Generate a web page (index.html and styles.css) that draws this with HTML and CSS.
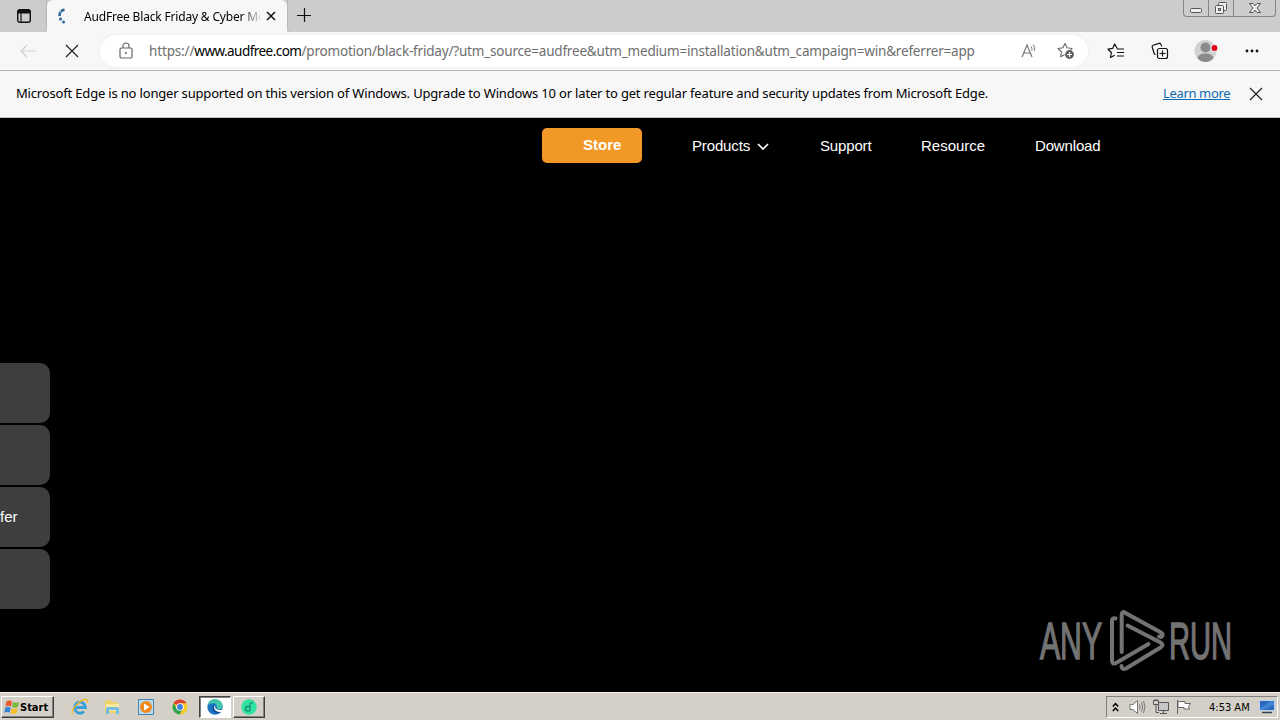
FILE: index.html
```html
<!DOCTYPE html>
<html>
<head>
    <meta charset="UTF-8">
    <title>AudFree Black Friday &amp; Cyber Monday</title>
    <link rel="stylesheet" href="styles.css">
</head>
<body>
    <!-- tab strip -->
    <div class="tabstrip">
        <div class="tab-menu">
            <svg width="16" height="16" viewBox="0 0 16 16"><rect x="1.7" y="1.7" width="12.6" height="12.6" rx="2" fill="none" stroke="#111" stroke-width="1.4"/><path d="M2 2h12v3.5H2z" fill="#111"/><path d="M5 5v9" stroke="#111" stroke-width="1.2"/></svg>
        </div>
        <div class="tab">
            <svg class="tab-spinner" width="12" height="16" viewBox="0 0 12 16"><path d="M7.500 1.600C3.800 2.600 2.300 5 2.500 8.200" fill="none" stroke="#2a679c" stroke-width="2.600" stroke-dasharray="4 .8"/><circle cx="3.500" cy="11" r="1.500" fill="#2a679c"/><circle cx="6.500" cy="14" r="1.500" fill="#2a679c"/></svg>
            <span class="tab-title">AudFree Black Friday &amp; Cyber Mo</span>
            <svg class="tab-close" width="10" height="10" viewBox="0 0 10 10"><path d="M1 1l8 8M9 1l-8 8" stroke="#111" stroke-width="1.5"/></svg>
        </div>
        <div class="tab-new">
            <svg width="14" height="14" viewBox="0 0 14 14"><path d="M7.5 0v14M0 7.5h14" stroke="#111" stroke-width="1.2"/></svg>
        </div>
        <div class="window-btns">
            <span class="win-btn"><svg width="14" height="14" viewBox="0 0 14 14"><rect x="1.5" y="8.5" width="11" height="4" rx="1" fill="#eee" stroke="#555"/></svg></span>
            <span class="win-btn"><svg width="14" height="14" viewBox="0 0 14 14"><rect x="4.5" y="2.5" width="8" height="8" rx="1" fill="#eee" stroke="#555"/><rect x="1.5" y="5.5" width="8" height="8" rx="1" fill="#eee" stroke="#555"/><rect x="4.5" y="8.5" width="2" height="2" fill="#ccc" stroke="#555"/></svg></span>
            <span class="win-btn win-close"><svg width="14" height="14" viewBox="0 0 14 14"><path d="M1.500 3.500h3.500l2 2.300 2-2.300h3.500l-3.500 4.500 3.500 4.500H9L7 10.200 5 12.500H1.500L5 8z" fill="#eee" stroke="#555"/></svg></span>
        </div>
    </div>

    <!-- address bar -->
    <div class="toolbar">
        <svg class="back" width="16" height="14" viewBox="0 0 16 14"><path d="M15.500 7H1M7 1L1 7l6 6" fill="none" stroke="#cfcfcf" stroke-width="1.2"/></svg>
        <svg class="stop" width="14" height="14" viewBox="0 0 14 14"><path d="M1 1l12 12M13 1L1 13" stroke="#222" stroke-width="1.200"/></svg>
        <div class="address">
            <svg class="lock" width="14" height="18" viewBox="0 0 14 18"><rect x="1" y="6" width="12" height="10" rx="1.600" fill="none" stroke="#666" stroke-width="1.200"/><path d="M4 6V4a3 3 0 0 1 6 0v2" fill="none" stroke="#666" stroke-width="1.200"/><circle cx="7" cy="11" r="1" fill="#666"/></svg>
            <span class="url"><span class="scheme">https://</span><span class="host">www.audfree.com</span><span class="path">/promotion/black-friday/?utm_source=audfree&amp;utm_medium=installation&amp;utm_campaign=win&amp;referrer=app</span></span>
            <svg class="read" width="17" height="16" viewBox="0 0 17 16"><path d="M1 14L6 2l5 12M2.800 10h6.400" fill="none" stroke="#777" stroke-width="1.200"/><path d="M10 3.500q1.500 1.700 .8 4M12 1.500q3 3 1.200 6.500" fill="none" stroke="#777"/></svg>
            <svg class="fav" width="18" height="18" viewBox="0 0 18 18"><path d="M8 1.500l2.100 4.300 4.900.7-3.500 3.400.8 4.800L8 12.500l-4.300 2.200.8-4.800L1 6.500l4.900-.7z" fill="none" stroke="#666" stroke-width="1.100" stroke-linejoin="round"/><circle cx="12.500" cy="12.500" r="5" fill="#fff"/><circle cx="12.500" cy="12.500" r="4.400" fill="#5c5c5c"/><path d="M12.500 10v5M10 12.500h5" stroke="#fff" stroke-width="1.200"/></svg>
        </div>
        <svg class="favs" width="18" height="16" viewBox="0 0 18 16"><path d="M10.200 5.500L7.700 1 5.600 5.400 1 6.200l3.400 3.300-.9 5 4.200-2.300M10 6h7M10 9.500h7M10 13h7" fill="none" stroke="#111" stroke-width="1.200" stroke-linejoin="round"/></svg>
        <svg class="collections" width="18" height="18" viewBox="0 0 18 18"><path d="M4.500 12.500q-1 0-1.400-1.200L1.200 5.300Q.8 3.800 2.300 3.200L8 1.400q1.500-.4 2 1l.8 2" fill="none" stroke="#111" stroke-width="1.200"/><rect x="6.500" y="6.500" width="10" height="10" rx="2" fill="#f7f7f7" stroke="#111" stroke-width="1.200"/><path d="M11.500 8.500v6M8.500 11.500h6" stroke="#111" stroke-width="1.200"/></svg>
        <svg class="profile" width="24" height="24" viewBox="0 0 24 24"><circle cx="11.500" cy="12" r="11" fill="#d2d2d0"/><circle cx="11.500" cy="8.500" r="5" fill="#8b8b89"/><path d="M3.500 19q1-4.500 8-4.500t8 4.500q-3 4-8 4t-8-4z" fill="#8b8b89"/><circle cx="20.500" cy="9" r="4" fill="#f7f7f7" fill-opacity=".6"/><circle cx="20.500" cy="9" r="2.900" fill="#e3001b"/></svg>
        <svg class="more" width="14" height="4" viewBox="0 0 14 4"><g fill="#111"><circle cx="2" cy="2" r="1.400"/><circle cx="7" cy="2" r="1.400"/><circle cx="12" cy="2" r="1.400"/></g></svg>
    </div>

    <!-- info bar -->
    <div class="infobar">
        <span class="info-text">Microsoft Edge is no longer supported on this version of Windows. Upgrade to Windows 10 or later to get regular feature and security updates from Microsoft Edge.</span>
        <a class="info-link">Learn more</a>
        <svg class="info-close" width="14" height="14" viewBox="0 0 14 14"><path d="M1 1l12 12M13 1L1 13" stroke="#222" stroke-width="1.200"/></svg>
    </div>

    <!-- web page -->
    <div class="page">
        <div class="nav">
            <a class="store">Store</a>
            <a class="nav-item products">Products <svg width="12" height="8" viewBox="0 0 12 8"><path d="M1 1l5 5 5-5" fill="none" stroke="#fff" stroke-width="1.700"/></svg></a>
            <a class="nav-item support">Support</a>
            <a class="nav-item resource">Resource</a>
            <a class="nav-item download">Download</a>
        </div>
        <ul class="side">
            <li></li>
            <li></li>
            <li>fer</li>
            <li></li>
        </ul>
        <div class="watermark">
            <svg width="220" height="76" viewBox="0 0 220 76">
                <g class="mark-text">
                    <text x="5" y="53" textLength="62" lengthAdjust="spacingAndGlyphs">ANY</text>
                    <text x="134" y="53" textLength="63" lengthAdjust="spacingAndGlyphs">RUN</text>
                </g>
                <g class="mark-logo">
                    <path d="M80.500 12.500Q77 11.500 77 15V54.500Q77 59 81 57L113.500 38"/>
                    <path d="M86.700 46V9Q86.700 4.500 90.500 7L126 26.500Q129.500 29 126 31L124 30.500"/>
                    <path d="M92.500 19.500L125.500 36.500Q129.500 39 125.500 41.500L91 62.500Q87 64.500 86.500 60"/>
                </g>
            </svg>
        </div>
    </div>

    <!-- taskbar -->
    <div class="taskbar">
        <div class="start">
            <svg width="16" height="16" viewBox="0 0 16 16"><path d="M2.500 2.500q3-2 5.500 0L7 7.500q-3-1.500-5.500 0z" fill="#e8572b"/><path d="M9 3q3 1.500 6 0l-1.200 5Q11 9.500 8 8z" fill="#78b83a"/><path d="M1.200 8.800q3-2 5.500 0l-1 5q-3-1.500-5.500 0z" fill="#3a86d4"/><path d="M7.700 9.200q3 1.500 6 0l-1.200 5q-3 1.500-5.800 0z" fill="#f6bd25"/></svg>
            <span>Start</span>
        </div>
        <div class="launch">
            <svg width="18" height="18" viewBox="0 0 18 18"><path d="M4.200 9.500h10.300A5.500 5.500 0 1 0 13 13.500" fill="none" stroke="#35a0dc" stroke-width="2.800"/><path d="M1.500 16C-1 12 11-.5 16 1.800q1.500 1 .2 3.200" fill="none" stroke="#efb930" stroke-width="1.400"/></svg>
        </div>
        <div class="launch">
            <svg width="16" height="16" viewBox="0 0 16 16"><path d="M1 3l1-2h5l1 2h6v11H1z" fill="#ecd16c"/><path d="M2 5h13v7H2z" fill="#fbe9a0"/><path d="M2 15v-5q0-2 2-2h9q2 0 2 2v5h-3v-4H5v4z" fill="#75bede"/></svg>
        </div>
        <div class="launch">
            <svg width="16" height="16" viewBox="0 0 16 16"><path d="M.5.500h15v15H.5z" fill="#b9dbf0" stroke="#4783b5"/><circle cx="8" cy="8" r="6" fill="#f08a1c"/><path d="M6 4.500l5.500 3.500L6 11.500z" fill="#fff"/></svg>
        </div>
        <div class="launch">
            <svg width="16" height="16" viewBox="0 0 16 16"><circle cx="8" cy="8" r="7.500" fill="#f8ca26"/><path d="M8 8L1.500 4.200A7.500 7.500 0 0 1 14.500 4.200H8z" fill="#dd4335"/><path d="M1.500 4.200A7.500 7.500 0 0 0 7.500 15.500L11 9.800H5z" fill="#31a350"/><circle cx="8" cy="8" r="3.800" fill="#fff"/><circle cx="8" cy="8" r="2.900" fill="#3b7de0"/></svg>
        </div>
        <div class="task active">
            <svg width="16" height="16" viewBox="0 0 16 16"><circle cx="8" cy="8" r="7.700" fill="#1b75c4"/><path d="M.6 6C2 1 5 .3 8 .3c5 0 7.700 3.700 7.700 7 0 3-5 4-6 2 1-3-1-5-4-5Q3 4.300.6 6z" fill="#43c8a7"/><path d="M6 7q-2 5 3 7 3 .5 5-1-6 .3-6-6z" fill="#124b91"/><path d="M8 6.500q-.5 5 6.500 4.500l1.500-1v4l-2-1q-7 0-7-5z" fill="#fff"/></svg>
        </div>
        <div class="task">
            <svg width="16" height="16" viewBox="0 0 16 16"><circle cx="8" cy="8" r="7.700" fill="#32e2a0"/><path d="M9 12V4.500l3-1M9 7.500H6.500q-2 0-2 2.200t2 2.200H9" fill="none" stroke="#168b74" stroke-width="1.300"/></svg>
        </div>
        <div class="tray">
            <svg class="tray-up" width="7" height="11" viewBox="0 0 7 11"><path d="M.8 4.500l2.700-3 2.700 3M.8 9l2.700-3 2.700 3" fill="none" stroke="#000" stroke-width="1.500"/></svg>
            <svg class="tray-sound" width="17" height="16" viewBox="0 0 17 16"><path d="M1 5.500h3L8.500 1.500v13L4 10.500H1z" fill="#fff" stroke="#777"/><path d="M10.500 5.500q1.500 2.500 0 5M12.500 3.500q2.500 4.500 0 9M14.500 2q3 6 0 12" fill="none" stroke="#777"/></svg>
            <svg class="tray-net" width="16" height="16" viewBox="0 0 16 16"><path d="M5.500 3.500h10v8h-10zM7 14.500h7M10.500 12v2" fill="#c8c8c8" stroke="#555"/><path d="M.5 1.500h5v4h-5zM2 0v1.500M4 0v1.500M3 5.500v8h3" fill="none" stroke="#555"/></svg>
            <svg class="tray-flag" width="16" height="16" viewBox="0 0 16 16"><path d="M1.500 1v14M2 2.500h7v2h5.500l-2 3 1 2.500H8V8.500H2z" fill="#fff" stroke="#666"/></svg>
            <span class="clock">4:53 AM</span>
            <svg class="tray-desk" width="16" height="14" viewBox="0 0 16 14"><path d="M.5.500h15v10H.5z" fill="#2d66bd" stroke="#b9d4ef"/><path d="M1 8L12 1h3v4L5 10H1z" fill="#3f83d1"/><path d="M3 12.500h10" stroke="#345" stroke-width="1.500"/></svg>
        </div>
    </div>
</body>
</html>
```
FILE: styles.css
```css
* {
    margin: 0;
    padding: 0;
    box-sizing: border-box;
}
body {
    width: 1280px;
    height: 720px;
    overflow: hidden;
    display: flex;
    flex-direction: column;
    font-family: "Noto Sans", "Open Sans", sans-serif;
    font-size: 13px;
    color: #000;
    background-color: #000;
}
svg {
    display: block;
    flex-shrink: 0;
}
ul {
    list-style: none;
}

/* tab strip */
.tabstrip {
    display: flex;
    height: 32px;
    background-color: #cccccc;
}
.tab-menu {
    width: 47px;
    padding: 8px 0 0 16px;
    border-right: 1px solid #b8b8b8;
    border-bottom-right-radius: 5px;
}
.tab {
    display: flex;
    align-items: center;
    width: 240px;
    padding-left: 10px;
    background-color: #f7f7f7;
    border-radius: 6px 6px 0 0;
}
.tab-title {
    width: 176px;
    margin-left: 15px;
    white-space: nowrap;
    font-size: 12px;
    letter-spacing: -0.18px;
    -webkit-mask-image: linear-gradient(to right, #000 158px, transparent 178px);
    mask-image: linear-gradient(to right, #000 158px, transparent 178px);
}
.tab-close {
    margin-left: 6px;
}
.tab-new {
    flex: 1;
    padding: 8px 0 0 9px;
    border-left: 1px solid #b8b8b8;
    border-bottom-left-radius: 5px;
}
.window-btns {
    display: flex;
    height: 17px;
    margin-right: 4px;
    border: 1px solid #848484;
    border-top: 0;
    border-radius: 0 0 4px 4px;
}
.win-btn {
    display: flex;
    justify-content: center;
    width: 25px;
    border-right: 1px solid #848484;
}
.win-close {
    width: 41px;
    border-right: 0;
}

/* address bar */
.toolbar {
    display: flex;
    align-items: center;
    height: 39px;
    padding-left: 20px;
    background-color: #f7f7f7;
    border-bottom: 1px solid #b5b5b5;
}
.stop {
    margin-left: 29px;
}
.address {
    display: flex;
    align-items: center;
    width: 988px;
    height: 32px;
    margin-left: 21px;
    padding-left: 19px;
    border-radius: 16px;
    background-color: #fff;
    box-shadow: 0 0 0 1px #f1f1f1;
}
.url {
    width: 872px;
    margin-left: 16px;
    white-space: nowrap;
    font-size: 13.5px;
    color: #6e6e6e;
}
.scheme {
    letter-spacing: -0.15px;
}
.host {
    letter-spacing: -0.54px;
    color: #000;
}
.path {
    letter-spacing: -0.19px;
}
.fav {
    margin-left: 19px;
}
.favs {
    margin-left: 19px;
}
.collections {
    margin-left: 26px;
}
.profile {
    margin-left: 25px;
}
.more {
    margin-left: 27px;
}

/* info bar */
.infobar {
    display: flex;
    align-items: center;
    height: 47px;
    padding-left: 16px;
    background-color: #f7f7f7;
    border-bottom: 1px solid #c4c4c4;
}
.info-text {
    width: 1147px;
    padding-bottom: 2px;
    white-space: nowrap;
    letter-spacing: -0.174px;
}
.info-link {
    width: 68px;
    padding-bottom: 2px;
    white-space: nowrap;
    letter-spacing: -0.35px;
    color: #0f6cb0;
    text-decoration: underline;
}
.info-close {
    margin-left: 18px;
}

/* web page */
.page {
    position: relative;
    height: 574px;
    background-color: #000;
    color: #fff;
    font-family: "Liberation Sans", Arial, sans-serif;
    font-size: 15px;
}
.nav {
    display: flex;
    gap: 50px;
    padding: 10px 0 0 542px;
}
.store {
    width: 100px;
    height: 35px;
    padding-left: 41px;
    border-radius: 5px;
    background-color: #f19826;
    font-size: 15px;
    font-weight: bold;
    line-height: 34px;
}
.nav-item {
    line-height: 36px;
    white-space: nowrap;
    letter-spacing: -0.15px;
}
.products {
    display: flex;
    align-items: center;
    justify-content: space-between;
    width: 78px;
    height: 36px;
}
.products svg {
    margin: 2px 1px 0 0;
}
.support {
    width: 51px;
}
.resource {
    width: 64px;
    letter-spacing: 0;
}
.side {
    width: 50px;
    margin-top: 199px;
}
.side li {
    height: 60px;
    margin-bottom: 2px;
    line-height: 60px;
    border-radius: 0 10px 10px 0;
    background-color: #3e3e3e;
}
.watermark {
    position: absolute;
    top: 488px;
    left: 1035px;
}
.mark-text {
    font-size: 52px;
    fill: #737373;
    stroke: #737373;
    stroke-width: 1.5px;
}
.mark-logo {
    fill: none;
    stroke: #737373;
    stroke-width: 4;
    stroke-linecap: round;
}

/* taskbar */
.taskbar {
    display: flex;
    align-items: center;
    height: 28px;
    padding-top: 1px;
    background-color: #d4d0c8;
    border-top: 1px solid #f4f3f0;
    font-family: "DejaVu Sans Condensed", "DejaVu Sans", sans-serif;
    font-size: 11px;
}
.start {
    display: flex;
    align-items: center;
    width: 53px;
    height: 22px;
    margin: 0 10px 0 1px;
    padding-left: 2px;
    border: 1px solid;
    border-color: #fff #404040 #404040 #fff;
    box-shadow: inset -1px -1px 0 #808080;
    font-weight: bold;
}
.launch {
    display: flex;
    align-items: center;
    justify-content: center;
    width: 34px;
}
.launch:nth-child(2) {
    width: 31px;
}
.task {
    display: flex;
    align-items: center;
    justify-content: center;
    width: 32px;
    height: 22px;
    margin-left: 2px;
    border: 1px solid;
    border-color: #fff #404040 #404040 #fff;
    box-shadow: inset -1px -1px 0 #808080;
}
.active {
    background-color: #fff;
    border-color: #404040 #fff #fff #404040;
    box-shadow: inset 1px 1px 0 #808080;
}
.tray {
    display: flex;
    align-items: center;
    width: 172px;
    height: 22px;
    margin: 0 2px 0 auto;
    padding-left: 5px;
    border: 1px solid;
    border-color: #808080 #fff #fff #808080;
}
.tray-sound {
    margin-left: 10px;
}
.tray-net {
    margin-left: 7px;
}
.tray-flag {
    margin-left: 7px;
}
.clock {
    width: 42px;
    margin-left: 17px;
    white-space: nowrap;
}
.tray-desk {
    margin-left: 8px;
}
```
